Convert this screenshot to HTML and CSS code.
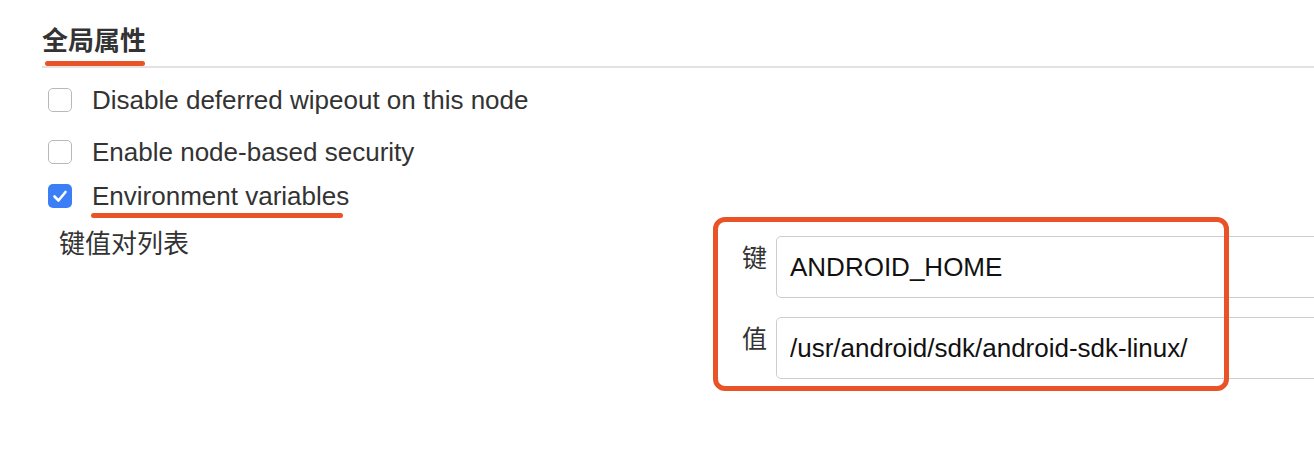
FILE: index.html
```html
<!DOCTYPE html>
<html lang="zh-CN">
<head>
    <meta charset="UTF-8">
    <meta name="viewport" content="width=device-width, initial-scale=1.0">
    <title>全局属性</title>
    <link rel="stylesheet" href="styles.css">
</head>
<body>
    <div class="section">
        <div class="section-title">
            <span class="title-text">全局属性</span>
            <span class="title-mark"></span>
        </div>

        <div class="option-row row-first">
            <span class="checkbox"></span>
            <span class="option-label">Disable deferred wipeout on this node</span>
        </div>
        <div class="option-row row-second">
            <span class="checkbox"></span>
            <span class="option-label">Enable node-based security</span>
        </div>
        <div class="option-row">
            <span class="checkbox checked">
                <svg viewBox="0 0 24 24" width="24" height="24">
                    <path d="M6.5 12.5 L10.5 16.5 L17.5 8" fill="none" stroke="white" stroke-width="2.6" stroke-linecap="round" stroke-linejoin="round"/>
                </svg>
            </span>
            <span class="option-label marked">Environment variables</span>
        </div>

        <div class="env-block">
            <div class="env-title">键值对列表</div>
            <div class="env-list">
                <div class="env-box"></div>
                <div class="env-field">
                    <span class="env-key">键</span>
                    <input class="env-input" type="text" value="ANDROID_HOME">
                </div>
                <div class="env-field">
                    <span class="env-key">值</span>
                    <input class="env-input" type="text" value="/usr/android/sdk/android-sdk-linux/">
                </div>
            </div>
        </div>
    </div>
</body>
</html>
```

FILE: styles.css
```css
body {
    margin: 0;
    background-color: #fff;
    color: #333;
    font-family: "Liberation Sans", Arial, "Noto Sans CJK SC", sans-serif;
    font-size: 26px;
    overflow: hidden;
}
.section {
    padding-left: 42px;
}
.section-title {
    padding-top: 22px;
    border-bottom: 2px solid #e2e2e2;
}
.title-text {
    display: block;
    font-family: "Noto Sans CJK SC", sans-serif;
    font-weight: bold;
    font-size: 26px;
    line-height: 34px;
}
.title-mark {
    display: block;
    width: 100px;
    height: 5px;
    margin: 5px 0 0 3px;
    background-color: #ea5328;
    border-radius: 3px;
}
.option-row {
    display: flex;
    align-items: center;
    height: 44px;
    padding-left: 6px;
}
.row-first {
    margin-top: 10px;
}
.row-second {
    margin-top: 8px;
}
.checkbox {
    width: 22px;
    height: 22px;
    border: 1px solid #b8b8b8;
    border-radius: 5px;
    background-color: #fff;
    margin-right: 20px;
    flex-shrink: 0;
}
.checkbox.checked {
    width: 24px;
    height: 24px;
    border: none;
    background-color: #3b7ef5;
}
.checkbox svg {
    display: block;
}
.option-label {
    position: relative;
}
.option-label.marked::after {
    content: "";
    position: absolute;
    left: -1px;
    right: 6px;
    bottom: -6px;
    height: 5px;
    background-color: #ea5328;
    border-radius: 3px;
}
.env-block {
    display: flex;
    padding-left: 17px;
}
.env-title {
    font-family: "Noto Sans CJK SC", sans-serif;
    font-size: 26px;
    line-height: 30px;
    margin-top: 9px;
    width: 654px;
}
.env-list {
    position: relative;
    flex: 1;
    padding-top: 18px;
    padding-bottom: 12px;
    margin-right: -40px;
}
.env-box {
    position: absolute;
    left: 0;
    top: -1px;
    width: 506px;
    height: 164px;
    border: 5px solid #ea5328;
    border-radius: 12px;
}
.env-field {
    display: flex;
    align-items: flex-start;
    margin-bottom: 19px;
}
.env-key {
    font-family: "Noto Sans CJK SC", sans-serif;
    font-size: 25px;
    line-height: 30px;
    width: 63px;
    margin-top: 5px;
    box-sizing: border-box;
    padding-left: 29px;
}
.env-input {
    flex: 1;
    height: 62px;
    box-sizing: border-box;
    border: 1px solid #cdcdcd;
    border-radius: 5px;
    padding: 0 13px;
    font-family: "Liberation Sans", Arial, sans-serif;
    font-size: 26px;
    color: #111;
    outline: none;
}
```
